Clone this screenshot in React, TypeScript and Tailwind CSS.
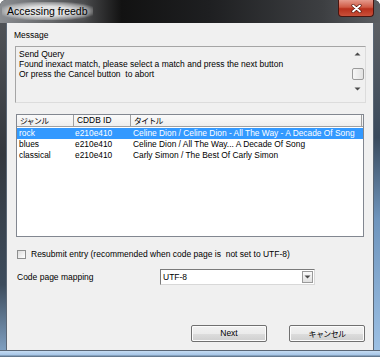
import { ReactNode } from 'react';

const ui = "font-['Liberation_Sans','Noto_Sans_CJK_JP',sans-serif]";
const jp = "font-['Noto_Sans_CJK_JP',sans-serif] tracking-[-0.6px]";

interface Row {
  genre: string;
  id: string;
  title: string;
}

const rows: Row[] = [
  { genre: 'rock', id: 'e210e410', title: 'Celine Dion / Celine Dion - All The Way - A Decade Of Song' },
  { genre: 'blues', id: 'e210e410', title: 'Celine Dion / All The Way... A Decade Of Song' },
  { genre: 'classical', id: 'e210e410', title: 'Carly Simon / The Best Of Carly Simon' },
];

function TitleBar() {
  return (
    <div className="h-[23px] flex items-start bg-[linear-gradient(90deg,#8a8d91_0%,#4a4b4d_22%,#121212_32%,#1e1f21_55%,#3d3f42_85%,#5b5e62_100%)]">
      <div className="pl-[2px] pt-[2px]">
        <span className="block px-[5px] h-[18px] leading-[18px] text-[10.5px] text-black bg-[radial-gradient(ellipse_at_center,rgba(255,255,255,0.8)_35%,rgba(255,255,255,0.35)_65%,rgba(255,255,255,0)_80%)] [text-shadow:0_0_6px_#fff]">
          Accessing freedb
        </span>
      </div>
      <div className="ml-auto mr-[6px] w-[36px] h-[17px] rounded-b-[4px] border border-t-0 border-[#4a1610] bg-[linear-gradient(180deg,#e59a8c_0%,#cf5a45_45%,#b8301c_55%,#c9503a_100%)] flex items-center justify-center">
        <svg width="11" height="9" viewBox="0 0 11 9">
          <path d="M2 1.5 L9 7.5 M9 1.5 L2 7.5" stroke="#5a1a10" strokeWidth="3.2" strokeLinecap="round" />
          <path d="M2 1.5 L9 7.5 M9 1.5 L2 7.5" stroke="#ffffff" strokeWidth="1.8" strokeLinecap="round" />
        </svg>
      </div>
    </div>
  );
}

function Arrow({ down }: { down?: boolean }) {
  return (
    <svg width="7" height="4" viewBox="0 0 7 4">
      <path d={down ? 'M0.5 0.5 H6.5 L3.5 3.5 Z' : 'M0.5 3.5 H6.5 L3.5 0.5 Z'} fill="#4a4a4a" />
    </svg>
  );
}

function MessageBox() {
  return (
    <div className="ml-[8px] mt-[5px] w-[351px] h-[57px] flex border border-[#a5a5a5] border-r-[#dcdcdc] border-b-[#dcdcdc] bg-[#f0f0f0]">
      <div className="flex-1 pl-[3px] pt-[2px] text-[8.5px] leading-[10px] text-black">
        <div>Send Query</div>
        <div>Found inexact match, please select a match and press the next button</div>
        <div>Or press the Cancel button&nbsp; to abort</div>
      </div>
      <div className="w-[13px] flex flex-col items-center pt-[5px] mr-[1px]">
        <Arrow />
        <div className="mt-[12px] w-[12px] h-[12px] border border-[#9a9a9a] rounded-[2px] bg-[linear-gradient(90deg,#f6f6f6,#e2e2e2)]" />
        <div className="mt-[7px]">
          <Arrow down />
        </div>
      </div>
    </div>
  );
}

function HeaderCell({ children, w, className }: { children: ReactNode; w: string; className?: string }) {
  return (
    <div className={`${w} h-full pl-[3px] border-r border-[#a0a0a0] flex items-center ${className ?? ''}`}>
      {children}
    </div>
  );
}

function ResultList() {
  return (
    <div className="ml-[9px] mt-[11px] w-[348px] h-[123px] border border-[#828790] bg-white flex flex-col">
      <div className="h-[12px] flex border-b border-[#a0a0a0] bg-[linear-gradient(180deg,#fafafa,#eeeeee)] text-[8.4px] text-black">
        <HeaderCell w="w-[57px]">
          <span className={`${jp} text-[7.8px]`}>ジャンル</span>
        </HeaderCell>
        <HeaderCell w="w-[57px]">CDDB ID</HeaderCell>
        <HeaderCell w="flex-1" className="mr-[1px]">
          <span className={`${jp} text-[7.8px]`}>タイトル</span>
        </HeaderCell>
      </div>
      <div className="pt-[1px]">
        {rows.map((r, i) => (
          <div
            key={r.genre}
            className={`h-[11px] flex items-center text-[8.4px] leading-[11px] whitespace-nowrap ${
              i === 0 ? 'bg-[#3399ff] text-white' : 'text-black'
            }`}
          >
            <span className="w-[58px] pl-[2px]">{r.genre}</span>
            <span className="w-[58px]">{r.id}</span>
            <span className="flex-1">{r.title}</span>
          </div>
        ))}
      </div>
    </div>
  );
}

function Button({ children }: { children: ReactNode }) {
  return (
    <div className="w-[76px] h-[17px] rounded-[2px] border border-[#707070] bg-[linear-gradient(180deg,#f2f2f2_0%,#ebebeb_50%,#dddddd_51%,#cfcfcf_100%)] shadow-[inset_0_0_0_1px_#fcfcfc] flex items-center justify-center text-[8.5px] text-black">
      {children}
    </div>
  );
}

function Client() {
  return (
    <div className={`w-[366px] bg-[#f0f0f0] flex flex-col pt-[7px] text-black ${ui}`}>
      <div className="ml-[7px] h-[11px] leading-[11px] text-[8.5px]">Message</div>
      <MessageBox />
      <ResultList />

      <div className="mt-[12px] ml-[10px] h-[10px] flex items-center text-[8.5px]">
        <div className="w-[9px] h-[9px] border border-[#8e8f8f] bg-[linear-gradient(135deg,#dcdcdc,#ffffff)]" />
        <span className="ml-[5px]">Resubmit entry (recommended when code page is&nbsp; not set to UTF-8)</span>
      </div>

      <div className="mt-[10px] ml-[10px] h-[16px] flex items-center text-[8.5px]">
        <span className="w-[143px]">Code page mapping</span>
        <div className="w-[155px] h-[16px] border border-[#7a7a7a] border-r-[#d8d8d8] border-b-[#d8d8d8] bg-white flex items-center">
          <span className="pl-[2px] flex-1">UTF-8</span>
          <div className="w-[11px] h-[12px] mr-[1px] border border-[#9a9a9a] bg-[linear-gradient(180deg,#fafafa,#e0e0e0)] flex items-center justify-center">
            <Arrow down />
          </div>
        </div>
      </div>

      <div className="mt-[40px] mr-[8px] flex justify-end gap-[22px]">
        <Button>Next</Button>
        <Button>
          <span className={`${jp} text-[8px]`}>キャンセル</span>
        </Button>
      </div>
    </div>
  );
}

export default function App() {
  return (
    <div className={`w-[380px] h-[357px] flex flex-col overflow-hidden rounded-t-[6px] bg-[#2b2f35] ${ui}`}>
      <TitleBar />
      <div className="flex flex-1">
        <div className="w-[7px] bg-[linear-gradient(180deg,#4f5256_0%,#34383e_40%,#3d4c5c_80%,#7f9fc0_100%)] border-r border-[#5b6775]" />
        <Client />
        <div className="w-[7px] bg-[linear-gradient(180deg,#5c5f63_0%,#3a4a5c_35%,#6f95bd_60%,#9cc0e4_100%)] border-l border-[#5b6775]" />
      </div>
      <div className="h-[7px] border-t border-[#5b6775] bg-[linear-gradient(180deg,#c5dcf2_0%,#a9c8e8_60%,#506478_100%)]" />
    </div>
  );
}
